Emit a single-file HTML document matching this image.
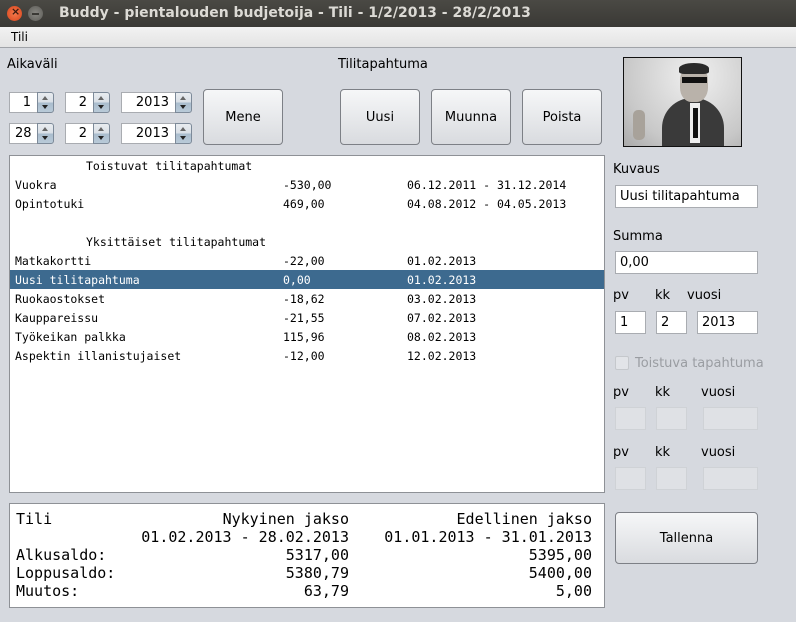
<!DOCTYPE html>
<html><head><meta charset="utf-8"><style>
*{margin:0;padding:0;box-sizing:border-box}
body{width:796px;height:622px;background:#d6d9df;font-family:"DejaVu Sans","Liberation Sans",sans-serif;font-size:13px;color:#000;position:relative;overflow:hidden}
.a{position:absolute;white-space:pre}
.title{left:0;top:0;width:796px;height:27px;background:linear-gradient(#4a4944,#3a3935);}
.menu{left:0;top:27px;width:796px;height:21px;background:linear-gradient(#f2f2f2,#e4e4e4);border-bottom:1px solid #a0a3a8}
.fld{position:absolute;background:#fff;border:1px solid #a9acb1;}
.dis{position:absolute;background:#dfe1e5;border:1px solid #cfd2d6;}
.btn{position:absolute;border:1px solid #7d8086;border-radius:4px;background:linear-gradient(#f6f7f8,#d9dbdf);text-align:center;font-size:13px}
.spin{position:absolute;width:17px;height:21px;border:1px solid #7d8a99;border-radius:0 3px 3px 0;background:linear-gradient(#e8ecf0 0%,#d9dfe6 50%,#a9bccd 51%,#b9cad8 100%)}
.spin:before{content:"";position:absolute;left:4px;top:3px;border:3.5px solid transparent;border-bottom:4px solid #666;border-top:0}
.spin:after{content:"";position:absolute;left:4px;top:12px;border:3.5px solid transparent;border-top:4px solid #222;border-bottom:0}
.mono{font-family:"DejaVu Sans Mono","Liberation Mono",monospace;font-size:11.5px}
.big{font-family:"DejaVu Sans Mono","Liberation Mono",monospace;font-size:15px}
.r{text-align:right}
</style></head><body>
<div class="a title"></div>
<div class="a" style="left:7px;top:6px;width:15px;height:15px;border-radius:50%;background:radial-gradient(#f47a4c,#d8441c);"></div>
<div class="a" style="left:11px;top:5px;color:#3a1a10;font-size:11px;font-weight:bold">×</div>
<div class="a" style="left:28px;top:6px;width:15px;height:15px;border-radius:50%;background:radial-gradient(#8a8984,#5c5b57);"></div>
<div class="a" style="left:32px;top:13px;width:7px;height:2px;background:#3a3935"></div>
<div class="a" style="left:59px;top:5px;color:#dcdad5;font-weight:bold;font-size:14px">Buddy - pientalouden budjetoija - Tili - 1/2/2013 - 28/2/2013</div>
<div class="a menu"></div>
<div class="a" style="left:11px;top:30px;font-size:12px">Tili</div>

<div class="a" style="left:7px;top:57px">Aikaväli</div>
<div class="a" style="left:338px;top:57px">Tilitapahtuma</div>

<div class="fld" style="left:9px;top:92px;width:29px;height:21px"><span class="a r" style="right:6px;top:2px">1</span></div><div class="spin" style="left:37px;top:92px"></div>
<div class="fld" style="left:65px;top:92px;width:29px;height:21px"><span class="a r" style="right:6px;top:2px">2</span></div><div class="spin" style="left:93px;top:92px"></div>
<div class="fld" style="left:121px;top:92px;width:55px;height:21px"><span class="a r" style="right:6px;top:2px">2013</span></div><div class="spin" style="left:175px;top:92px"></div>
<div class="fld" style="left:9px;top:123px;width:29px;height:21px"><span class="a" style="left:5px;top:2px">28</span></div><div class="spin" style="left:37px;top:123px"></div>
<div class="fld" style="left:65px;top:123px;width:29px;height:21px"><span class="a r" style="right:6px;top:2px">2</span></div><div class="spin" style="left:93px;top:123px"></div>
<div class="fld" style="left:121px;top:123px;width:55px;height:21px"><span class="a r" style="right:6px;top:2px">2013</span></div><div class="spin" style="left:175px;top:123px"></div>

<div class="btn" style="left:203px;top:89px;width:80px;height:56px;line-height:56px">Mene</div>
<div class="btn" style="left:340px;top:89px;width:80px;height:56px;line-height:56px">Uusi</div>
<div class="btn" style="left:431px;top:89px;width:80px;height:56px;line-height:56px">Muunna</div>
<div class="btn" style="left:522px;top:89px;width:80px;height:56px;line-height:56px">Poista</div>

<div class="a" style="left:623px;top:57px;width:119px;height:90px;border:1px solid #111;background:radial-gradient(ellipse at 60% 20%,#f0f0f0,#c8c8c8 70%,#aaa);overflow:hidden">
<div class="a" style="left:38px;top:40px;width:62px;height:55px;border-radius:30px 30px 0 0;background:#3a3a3a"></div>
<div class="a" style="left:56px;top:8px;width:28px;height:36px;border-radius:40%;background:#b9b2aa"></div>
<div class="a" style="left:55px;top:5px;width:30px;height:11px;border-radius:50% 50% 20% 20%;background:#2a2a2a"></div>
<div class="a" style="left:58px;top:19px;width:25px;height:6px;background:#111"></div>
<div class="a" style="left:66px;top:45px;width:10px;height:40px;background:#eee"></div>
<div class="a" style="left:69px;top:50px;width:5px;height:30px;background:#111"></div>
<div class="a" style="left:9px;top:52px;width:12px;height:30px;border-radius:5px;background:#a8a29a"></div>
</div>

<div class="a" style="left:9px;top:155px;width:596px;height:338px;background:#fff;border:1px solid #8e9196"></div>
<div class="a" style="left:10px;top:270px;width:594px;height:19px;background:#3d6a8f"></div>
<div class="a mono" style="left:86px;top:159px">Toistuvat tilitapahtumat</div>
<div class="a mono" style="left:15px;top:178px">Vuokra</div><div class="a mono" style="left:283px;top:178px">-530,00</div><div class="a mono" style="left:407px;top:178px">06.12.2011 - 31.12.2014</div>
<div class="a mono" style="left:15px;top:197px">Opintotuki</div><div class="a mono" style="left:283px;top:197px">469,00</div><div class="a mono" style="left:407px;top:197px">04.08.2012 - 04.05.2013</div>
<div class="a mono" style="left:86px;top:235px">Yksittäiset tilitapahtumat</div>
<div class="a mono" style="left:15px;top:254px">Matkakortti</div><div class="a mono" style="left:283px;top:254px">-22,00</div><div class="a mono" style="left:407px;top:254px">01.02.2013</div>
<div class="a mono" style="left:15px;top:273px;color:#fff">Uusi tilitapahtuma</div><div class="a mono" style="left:283px;top:273px;color:#fff">0,00</div><div class="a mono" style="left:407px;top:273px;color:#fff">01.02.2013</div>
<div class="a mono" style="left:15px;top:292px">Ruokaostokset</div><div class="a mono" style="left:283px;top:292px">-18,62</div><div class="a mono" style="left:407px;top:292px">03.02.2013</div>
<div class="a mono" style="left:15px;top:311px">Kauppareissu</div><div class="a mono" style="left:283px;top:311px">-21,55</div><div class="a mono" style="left:407px;top:311px">07.02.2013</div>
<div class="a mono" style="left:15px;top:330px">Työkeikan palkka</div><div class="a mono" style="left:283px;top:330px">115,96</div><div class="a mono" style="left:407px;top:330px">08.02.2013</div>
<div class="a mono" style="left:15px;top:349px">Aspektin illanistujaiset</div><div class="a mono" style="left:283px;top:349px">-12,00</div><div class="a mono" style="left:407px;top:349px">12.02.2013</div>

<div class="a" style="left:9px;top:503px;width:596px;height:105px;background:#fff;border:1px solid #8e9196"></div>
<div class="a big" style="left:16px;top:510px;line-height:18px">Tili

Alkusaldo:
Loppusaldo:
Muutos:</div>
<div class="a big r" style="right:447px;top:510px;line-height:18px">Nykyinen jakso
01.02.2013 - 28.02.2013
5317,00
5380,79
63,79</div>
<div class="a big r" style="right:204px;top:510px;line-height:18px">Edellinen jakso
01.01.2013 - 31.01.2013
5395,00
5400,00
5,00</div>

<div class="a" style="left:613px;top:162px">Kuvaus</div>
<div class="fld" style="left:615px;top:185px;width:143px;height:23px"><span class="a" style="left:4px;top:3px">Uusi tilitapahtuma</span></div>
<div class="a" style="left:613px;top:229px">Summa</div>
<div class="fld" style="left:615px;top:251px;width:143px;height:23px"><span class="a" style="left:4px;top:3px">0,00</span></div>
<div class="a" style="left:613px;top:288px">pv</div><div class="a" style="left:655px;top:288px">kk</div><div class="a" style="left:687px;top:288px">vuosi</div>
<div class="fld" style="left:615px;top:311px;width:31px;height:23px"><span class="a" style="left:4px;top:3px">1</span></div>
<div class="fld" style="left:656px;top:311px;width:31px;height:23px"><span class="a" style="left:4px;top:3px">2</span></div>
<div class="fld" style="left:697px;top:311px;width:61px;height:23px"><span class="a" style="left:4px;top:3px">2013</span></div>
<div class="a" style="left:615px;top:356px;width:14px;height:14px;border:1px solid #c5c8cc;border-radius:2px;background:#e2e4e8"></div>
<div class="a" style="left:635px;top:356px;color:#9a9da2">Toistuva tapahtuma</div>
<div class="a" style="left:613px;top:385px">pv</div><div class="a" style="left:655px;top:385px">kk</div><div class="a" style="left:701px;top:385px">vuosi</div>
<div class="dis" style="left:615px;top:407px;width:31px;height:23px"></div>
<div class="dis" style="left:656px;top:407px;width:31px;height:23px"></div>
<div class="dis" style="left:703px;top:407px;width:55px;height:23px"></div>
<div class="a" style="left:613px;top:445px">pv</div><div class="a" style="left:655px;top:445px">kk</div><div class="a" style="left:701px;top:445px">vuosi</div>
<div class="dis" style="left:615px;top:467px;width:31px;height:23px"></div>
<div class="dis" style="left:656px;top:467px;width:31px;height:23px"></div>
<div class="dis" style="left:703px;top:467px;width:55px;height:23px"></div>
<div class="btn" style="left:615px;top:512px;width:143px;height:52px;line-height:52px">Tallenna</div>
</body></html>
